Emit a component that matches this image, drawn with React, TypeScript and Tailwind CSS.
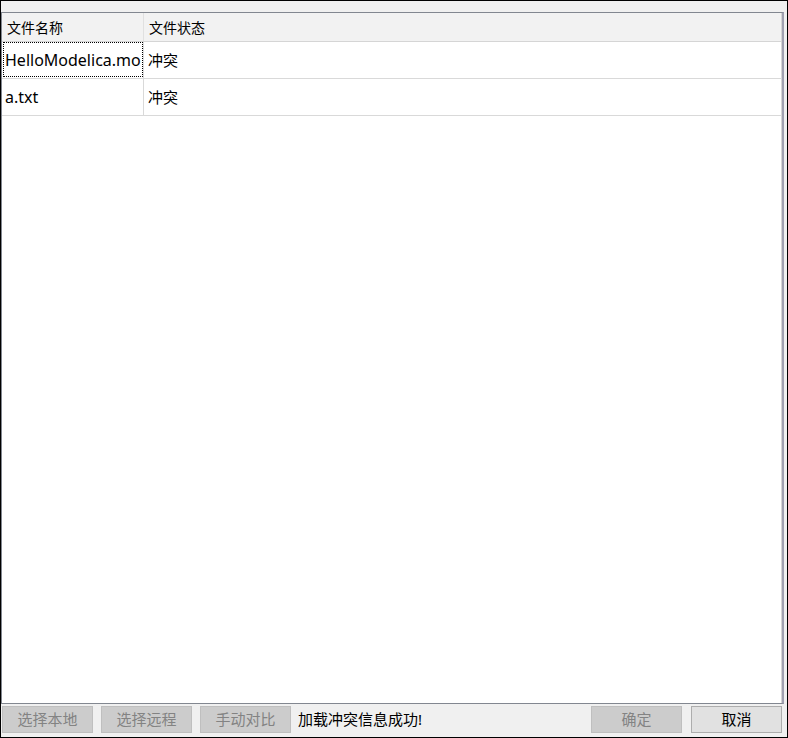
const rows = [
  { name: "HelloModelica.mo", status: "冲突" },
  { name: "a.txt", status: "冲突" },
];

const font = { fontFamily: '"Noto Sans", "Noto Sans CJK SC", sans-serif' };

function Btn({ label, disabled }: { label: string; disabled?: boolean }) {
  return (
    <button
      className={
        disabled
          ? "w-[91px] h-[27px] border border-[#bfbfbf] bg-[#cccccc] text-[#838383] text-[15px] leading-none"
          : "w-[91px] h-[27px] border border-[#adadad] bg-[#e1e1e1] text-black text-[15px] leading-none"
      }
    >
      {label}
    </button>
  );
}

export default function App() {
  return (
    <div
      className="w-[788px] h-[738px] border border-black bg-[#f0f0f0] flex flex-col"
      style={font}
    >
      {/* table */}
      <div className="mt-[11px] mr-[3px] h-[692px] border border-[#828790] border-r-2 border-r-[#a0a0b0] bg-white flex flex-col">
        <div className="flex h-[29px] bg-[#f2f2f2] border-b border-[#d5d5d5] text-[14px] text-black">
          <div className="w-[142px] border-r border-[#e0e0e0] pl-[5px] flex items-center">
            文件名称
          </div>
          <div className="flex-1 pl-[5px] flex items-center border-r border-[#d5d5d5]">
            文件状态
          </div>
        </div>
        {rows.map((r, i) => (
          <div key={r.name} className="flex h-[37px] border-b border-[#d9d9d9] text-[15px] text-black">
            <div className="w-[142px] border-r border-[#d9d9d9] pl-[1px] flex text-[16px] whitespace-nowrap overflow-hidden">
              <div
                className={
                  i === 0
                    ? "flex-1 border border-dotted border-black flex items-center pl-[1px] mb-[1px]"
                    : "flex-1 flex items-center pl-[2px]"
                }
              >
                {r.name}
              </div>
            </div>
            <div className="flex-1 pl-[4px] flex items-center border-r border-[#d5d5d5]">
              {r.status}
            </div>
          </div>
        ))}
        <div className="flex-1 border-r border-[#d5d5d5]" />
      </div>
      {/* bottom bar */}
      <div className="flex items-center mt-[2px] pl-[1px] pr-[5px] h-[27px]">
        <div className="flex gap-[8px]">
          <Btn label="选择本地" disabled />
          <Btn label="选择远程" disabled />
          <Btn label="手动对比" disabled />
        </div>
        <div className="ml-[7px] text-[15px] text-black">加载冲突信息成功!</div>
        <div className="ml-auto flex gap-[9px]">
          <Btn label="确定" disabled />
          <Btn label="取消" />
        </div>
      </div>
    </div>
  );
}
